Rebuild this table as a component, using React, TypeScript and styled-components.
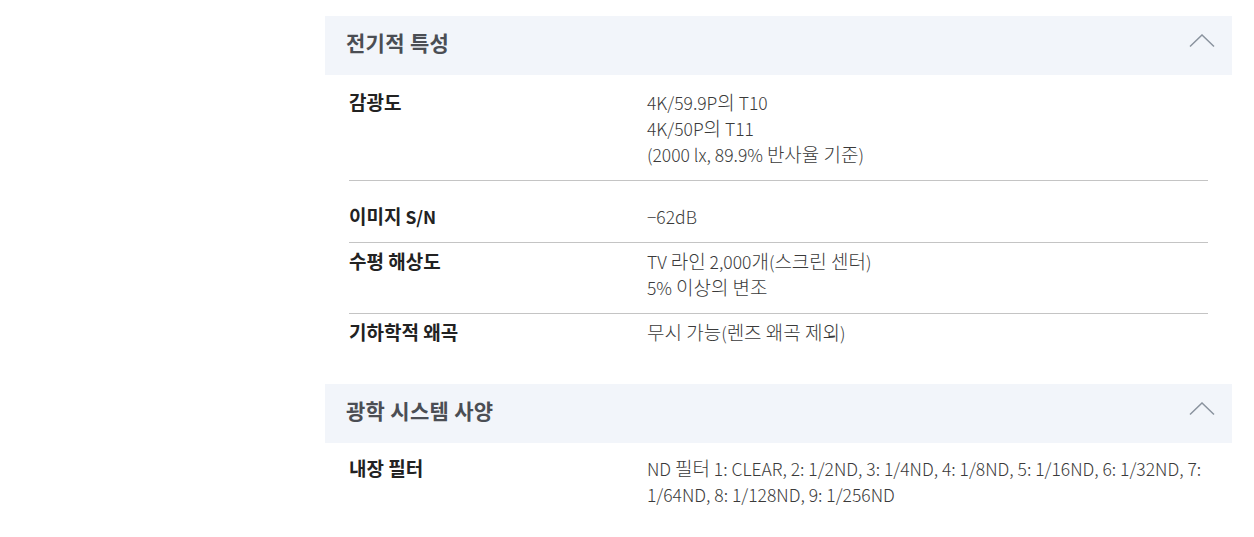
import React from "react";
import styled, { createGlobalStyle } from "styled-components";

const GlobalStyle = createGlobalStyle`
  body {
    margin: 0;
    background: #ffffff;
    font-family: "Noto Sans CJK KR", "Noto Sans", sans-serif;
  }
`;

const Page = styled.div`
  padding: 16px 0 0 325px;
`;

const Panel = styled.div`
  width: 907px;
  display: flex;
  flex-direction: column;
  gap: 26px;
`;

const Section = styled.section`
  display: flex;
  flex-direction: column;
`;

const SectionHeader = styled.div`
  height: 59px;
  background: #f2f5fa;
  display: flex;
  align-items: center;
  justify-content: space-between;
  padding: 0 17px 0 21px;
`;

const SectionTitle = styled.h2`
  margin: 0 0 8px;
  font-size: 21px;
  line-height: 26px;
  font-weight: 700;
  color: #4b4e54;
  letter-spacing: 0.3px;
`;

const Chevron = styled.svg`
  width: 26px;
  height: 14px;
  display: block;
  margin-bottom: 10px;
`;

const Rows = styled.div`
  padding: 0 24px;
  display: flex;
  flex-direction: column;
`;

const Row = styled.div<{ $top: number; $line: boolean }>`
  display: grid;
  grid-template-columns: 298px 561px;
  padding: ${(p) => p.$top}px 0 12px;
  border-bottom: ${(p) => (p.$line ? "1px solid #c4c4c4" : "none")};
`;

const Label = styled.div`
  font-size: 17.5px;
  line-height: 26px;
  font-weight: 700;
  color: #222222;
`;

const Value = styled.div`
  font-size: 17.5px;
  line-height: 26px;
  font-weight: 300;
  color: #3a3a3a;
`;

/* Hangul runs are set a little larger than the Latin text around them */
const Hangul = styled.span`
  font-size: 19px;
  line-height: 1;
`;

const Mixed = ({ text }: { text: string }) => (
  <>
    {text.split(/([\uAC00-\uD7A3]+(?: [\uAC00-\uD7A3]+)*)/).map((part, i) =>
      i % 2 === 1 ? <Hangul key={i}>{part}</Hangul> : part
    )}
  </>
);

type Spec = { label: string; lines: string[]; top: number };

const electrical: Spec[] = [
  {
    label: "감광도",
    lines: ["4K/59.9P의 T10", "4K/50P의 T11", "(2000 lx, 89.9% 반사율 기준)"],
    top: 15,
  },
  { label: "이미지 S/N", lines: ["−62dB"], top: 23 },
  {
    label: "수평 해상도",
    lines: ["TV 라인 2,000개(스크린 센터)", "5% 이상의 변조"],
    top: 6,
  },
  { label: "기하학적 왜곡", lines: ["무시 가능(렌즈 왜곡 제외)"], top: 6 },
];

const optical: Spec[] = [
  {
    label: "내장 필터",
    lines: [
      "ND 필터 1: CLEAR, 2: 1/2ND, 3: 1/4ND, 4: 1/8ND, 5: 1/16ND, 6: 1/32ND, 7: 1/64ND, 8: 1/128ND, 9: 1/256ND",
    ],
    top: 13,
  },
];

const UpIcon = () => (
  <Chevron viewBox="0 0 26 14">
    <path d="M1 12.5 L13 1 L25 12.5" fill="none" stroke="#8a939e" strokeWidth="1.5" />
  </Chevron>
);

const SpecSection = ({ title, specs }: { title: string; specs: Spec[] }) => (
  <Section>
    <SectionHeader>
      <SectionTitle>{title}</SectionTitle>
      <UpIcon />
    </SectionHeader>
    <Rows>
      {specs.map((s, i) => (
        <Row key={s.label} $top={s.top} $line={i < specs.length - 1}>
          <Label>
            <Mixed text={s.label} />
          </Label>
          <Value>
            {s.lines.map((l) => (
              <div key={l}>
                <Mixed text={l} />
              </div>
            ))}
          </Value>
        </Row>
      ))}
    </Rows>
  </Section>
);

const App = () => (
  <>
    <GlobalStyle />
    <Page>
      <Panel>
        <SpecSection title="전기적 특성" specs={electrical} />
        <SpecSection title="광학 시스템 사양" specs={optical} />
      </Panel>
    </Page>
  </>
);

export default App;
